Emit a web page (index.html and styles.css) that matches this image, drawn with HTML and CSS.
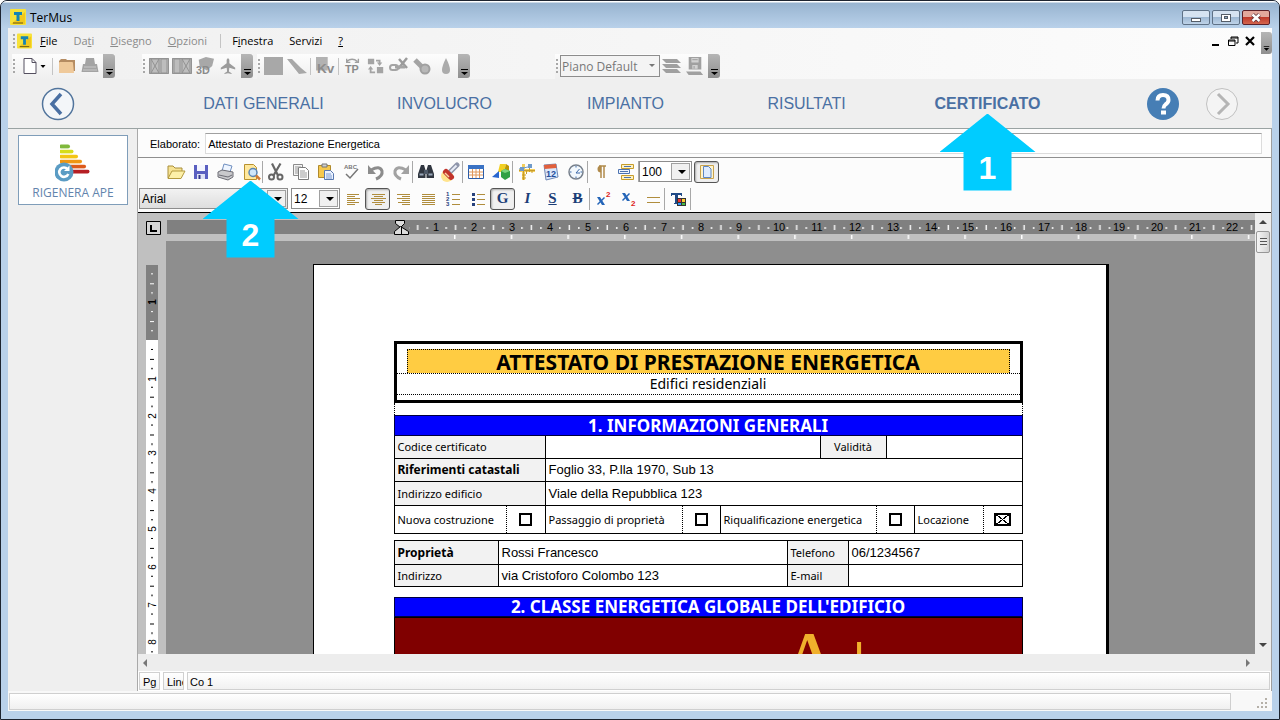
FILE: index.html
```html
<!DOCTYPE html>
<html lang="it">
<head>
    <meta charset="UTF-8">
    <meta name="viewport" content="width=device-width, initial-scale=1.0">
    <title>TerMus</title>
    <link rel="stylesheet" href="styles.css">
</head>
<body>
<div class="window">
    <header class="titlebar">
        <svg class="logo" viewBox="0 0 16 16"><rect width="16" height="16" rx="1" fill="#f7e23a"/><path d="M1 15h14V3z" fill="#f2c81c"/><path d="M4 3h8v3h-2.500v6h-3V6H4z" fill="#1584b5"/><path d="M3 14h10" stroke="#6b5a10"/></svg>
        <span class="app-name">TerMus</span>
        <div class="win-buttons">
            <button class="win-btn" aria-label="Riduci"><svg viewBox="0 0 26 13"><rect x="8.500" y="7.500" width="9" height="3" fill="#fff" stroke="#555d68"/></svg></button>
            <button class="win-btn" aria-label="Ingrandisci"><svg viewBox="0 0 26 13"><rect x="8.500" y="3.500" width="9" height="7" fill="#fff" stroke="#555d68"/><rect x="11.500" y="5.500" width="3" height="2" fill="#8fa9c4" stroke="#555d68"/></svg></button>
            <button class="win-btn close" aria-label="Chiudi"><svg viewBox="0 0 26 13"><path d="M9.500 3.500l7 6.500m0-6.500l-7 6.500" stroke="#61343a" stroke-width="4"/><path d="M9.500 3.500l7 6.500m0-6.500l-7 6.500" stroke="#fff" stroke-width="2.400"/></svg></button>
        </div>
    </header>

    <div class="bars">
        <nav class="menubar">
            <span class="grip"></span>
            <svg class="logo small" viewBox="0 0 16 16"><rect width="16" height="16" rx="1" fill="#f7e23a"/><path d="M1 15h14V3z" fill="#f2c81c"/><path d="M4 3h8v3h-2.500v6h-3V6H4z" fill="#1584b5"/><path d="M3 14h10" stroke="#6b5a10"/></svg>
            <button class="menu"><u>F</u>ile</button>
            <button class="menu" disabled>Da<u>t</u>i</button>
            <button class="menu" disabled><u>D</u>isegno</button>
            <button class="menu" disabled><u>O</u>pzioni</button>
            <span class="menu-sep"></span>
            <button class="menu">F<u>i</u>nestra</button>
            <button class="menu">Servizi</button>
            <button class="menu"><u>?</u></button>
            <div class="mdi">
                <button class="mdi-btn" aria-label="Riduci finestra"><svg viewBox="0 0 12 12"><path d="M2 9h7v2H2z"/></svg></button>
                <button class="mdi-btn" aria-label="Ripristina finestra"><svg viewBox="0 0 12 12"><path d="M4 2h7v6H9M4 2v2M4 3h7M1.500 5h6.500v5.500H1.500zM1 6h7" fill="none" stroke="#000"/></svg></button>
                <button class="mdi-btn" aria-label="Chiudi finestra"><svg viewBox="0 0 12 12"><path d="M2 2l8 8M10 2l-8 8" stroke="#000" stroke-width="2.200"/></svg></button>
                <button class="overflow" aria-label="Altro"><svg viewBox="0 0 12 8"><path d="M3 2h6v1H3zM3 4h6L6 7z"/></svg></button>
            </div>
        </nav>
        <div class="toolbar">
            <div class="tb-group first">
                <span class="grip"></span>
                <button class="tb-btn wide" aria-label="Nuovo"><svg viewBox="0 0 32 18"><path d="M6.500 1.500h8l4 4v11h-12z" fill="#fff" stroke="#555060"/><path d="M14.500 1.500v4h4" fill="none" stroke="#555060"/><path d="M23 8h5l-2.500 3z"/></svg></button>
                <span class="tb-sep"></span>
                <button class="tb-btn" aria-label="Apri"><svg viewBox="0 0 18 18"><path d="M1 4l2-2h5l1 1h8v11H1z" fill="#b58c62"/><path d="M1 16V6q0-1 1-1h12q1 0 1 1l1 10z" fill="#efc99a"/></svg></button>
                <button class="tb-btn" aria-label="Stampa"><svg viewBox="0 0 18 18"><path d="M5 1h8l1 6h2l1.500 8H.5L2 7h2z" fill="#a3a3a3"/><path d="M3 10h12M2 13h14" stroke="#c9c9c9"/></svg></button>
                <button class="overflow" aria-label="Altro"><svg viewBox="0 0 12 8"><path d="M3 1h7v1H3zM3 4h7L6.500 7z" fill="#000"/></svg></button>
            </div>
            <div class="tb-group second">
                <span class="grip"></span>
                <button class="tb-btn" aria-label="Pareti" disabled><svg viewBox="0 0 20 18"><path d="M0 1h20v16H0z" fill="#bdbdbd"/><path d="M.5 1.500h19v15H.5zM2 2h8v14H2zl8 14M10 2L2 16M12 2h6v14h-6z" fill="none" stroke="#939393"/></svg></button>
                <button class="tb-btn" aria-label="Finestre" disabled><svg viewBox="0 0 20 18"><path d="M0 1h20v16H0z" fill="#bdbdbd"/><path d="M.5 1.500h19v15H.5zM10 2h8v14h-8zl8 14M18 2l-8 14M2 2h6v14H2z" fill="none" stroke="#939393"/></svg></button>
                <button class="tb-btn" aria-label="Vista 3D" disabled><svg viewBox="0 0 20 20"><path d="M3 3l8-3 9 2-2 8-6 5-8-5z" fill="#a8a8a8"/><text x="0" y="19" class="g3d">3D</text></svg></button>
                <button class="tb-btn" aria-label="Orientamento" disabled><svg viewBox="0 0 18 20"><path d="M9 1l1.500 2v4L17 12v2l-6.500-2-.5 4 3 2v1l-4-1-4 1v-1l3-2-.5-4L1 14v-2l6.500-5V3z" fill="#9b9b9b"/></svg></button>
                <button class="overflow" aria-label="Altro"><svg viewBox="0 0 12 8"><path d="M3 1h7v1H3zM3 4h7L6.500 7z" fill="#000"/></svg></button>
            </div>
            <div class="tb-group third">
                <span class="grip"></span>
                <button class="tb-btn" aria-label="Superficie" disabled><svg viewBox="0 0 20 18"><path d="M0 0h19v18H0z" fill="#a8a8a8"/></svg></button>
                <button class="tb-btn" aria-label="Ponte" disabled><svg viewBox="0 0 20 18"><path d="M0 2h5l9 9 6 5-8 1z" fill="#a8a8a8"/></svg></button>
                <span class="tb-sep"></span>
                <button class="tb-btn" aria-label="Kv" disabled><svg viewBox="0 0 20 20"><path d="M0 0h13v15H0z" fill="#b2b2b2"/><text x="1" y="18" class="gkv">Kv</text></svg></button>
                <span class="tb-sep"></span>
                <button class="tb-btn" aria-label="TP" disabled><svg viewBox="0 0 20 20"><path d="M3 5q6-5 12 0M3 2v4h4M16 2v4h-4" fill="none" stroke="#a0a0a0" stroke-width="1.500"/><text x="1" y="18" class="g3d">TP</text></svg></button>
                <button class="tb-btn" aria-label="Sostituisci" disabled><svg viewBox="0 0 20 20"><path d="M1 2h7v6H1zM11 11h7v7h-7zM10 3h5v3h2l-3 4-3-4h2V5h-3zM3 18v-4H1l3-4 3 4H5v2h4v2z" fill="#a4a4a4"/></svg></button>
                <button class="tb-btn" aria-label="Scollega" disabled><svg viewBox="0 0 20 18"><path d="M10 2l8 9M18 1l-9 11" stroke="#9b9b9b" stroke-width="2.500"/><rect x="1" y="8" width="8" height="5" rx="2.500" fill="none" stroke="#a4a4a4" stroke-width="2"/><path d="M6 10h10" stroke="#a4a4a4" stroke-width="3"/></svg></button>
                <button class="tb-btn" aria-label="Pennello" disabled><svg viewBox="0 0 20 18"><path d="M3 3l7 7" stroke="#a4a4a4" stroke-width="5"/><circle cx="13" cy="12" r="4.500" fill="#b8b8b8" stroke="#a0a0a0" stroke-width="2"/></svg></button>
                <button class="tb-btn" aria-label="Goccia" disabled><svg viewBox="0 0 20 18"><path d="M11 1q4 8 4 12a4 4 0 0 1-8 0q0-4 4-12z" fill="#ababab"/></svg></button>
                <button class="overflow" aria-label="Altro"><svg viewBox="0 0 12 8"><path d="M3 1h7v1H3zM3 4h7L6.500 7z" fill="#000"/></svg></button>
            </div>
            <div class="tb-group fourth">
                <span class="grip"></span>
                <div class="combo flat"><select aria-label="Piano"><option>Piano Default</option></select></div>
                <button class="tb-btn" aria-label="Piani" disabled><svg viewBox="0 0 20 18"><path d="M0 2h15l4 4H4zM0 7h15l4 4H4zM0 12h15l4 4H4z" fill="#a0a0a0"/></svg></button>
                <button class="tb-btn" aria-label="Salva piano" disabled><svg viewBox="0 0 20 20"><path d="M3 0h14v14H3zM0 16h16l3 4H3z" fill="#a0a0a0"/><path d="M6 1h8v5H6zM7 9h6v4H7z" fill="#d2d2d2"/><path d="M7 3h6M9 10v3" stroke="#999"/></svg></button>
                <button class="overflow" aria-label="Altro"><svg viewBox="0 0 12 8"><path d="M3 1h7v1H3zM3 4h7L6.500 7z" fill="#000"/></svg></button>
            </div>
        </div>
    </div>

    <nav class="steps">
        <div class="steps-side">
            <button class="round" aria-label="Indietro"><svg viewBox="0 0 34 34"><circle cx="17" cy="17" r="15.500" fill="#f3f6f9" stroke="#51749c" stroke-width="1.500"/><path d="M20 7L11 17l9 10" fill="none" stroke="#4a70a3" stroke-width="3.500"/></svg></button>
        </div>
        <div class="tabs">
            <a class="tab" href="#dati">DATI GENERALI</a>
            <a class="tab" href="#involucro">INVOLUCRO</a>
            <a class="tab" href="#impianto">IMPIANTO</a>
            <a class="tab" href="#risultati">RISULTATI</a>
            <div class="anchor">
                <a class="tab active" href="#certificato">CERTIFICATO</a>
                <div class="callout"><span>1</span></div>
            </div>
        </div>
        <div class="steps-side right">
            <button class="round" aria-label="Guida"><svg viewBox="0 0 34 34"><circle cx="17" cy="17" r="16" fill="#467eb5"/><path d="M11.500 13.500q0-5.500 5.500-5.500t5.500 5q0 2.500-3 4.500-2 1.500-2 4" fill="none" stroke="#fff" stroke-width="4"/><path d="M15 23.500h5v4h-5z" fill="#fff"/></svg></button>
            <button class="round" aria-label="Avanti" disabled><svg viewBox="0 0 34 34"><circle cx="17" cy="17" r="15.500" fill="#f4f4f4" stroke="#c0c0c0"/><path d="M13 7l10 10-10 10" fill="none" stroke="#b5b5b5" stroke-width="3"/></svg></button>
        </div>
    </nav>

    <div class="main">
        <aside class="sidebar">
            <button class="card">
                <svg viewBox="0 0 36 40"><path d="M6 4.500h7" stroke="#7fb83b" stroke-width="4" stroke-linecap="round"/><path d="M6 9.500h10.500" stroke="#d6dd1a" stroke-width="4" stroke-linecap="round"/><path d="M6 14.500h15" stroke="#f3c514" stroke-width="4" stroke-linecap="round"/><path d="M6 19.500h19" stroke="#ef9613" stroke-width="4" stroke-linecap="round"/><path d="M6 24.500h23" stroke="#dd5a1b" stroke-width="4" stroke-linecap="round"/><path d="M6 29.500h26.500" stroke="#b61f24" stroke-width="4" stroke-linecap="round"/><path d="M2 0h3v40H2z" fill="#fff"/><path d="M5 6.700h30v.8H5zM5 11.700h30v.8H5zM5 16.700h30v.8H5zM5 21.700h30v.8H5zM5 26.700h30v.8H5z" fill="#fff"/><circle cx="9" cy="30" r="9.500" fill="#5b9cc4"/><path d="M12.500 27a4.700 4.700 0 1 0 .8 5" fill="none" stroke="#fff" stroke-width="2.600"/><path d="M14.500 23.500v5.500H9z" fill="#fff"/></svg>
                RIGENERA APE
            </button>
        </aside>

        <section class="content">
            <div class="field-row">
                <label for="elaborato">Elaborato:</label>
                <input id="elaborato" type="text" value="Attestato di Prestazione Energetica">
            </div>

            <div class="edit-bar top">
                <button class="ic" aria-label="Apri"><svg viewBox="0 0 20 20"><path d="M2 16V4h5l2 2h7v3" fill="#f7e394" stroke="#a98f3a"/><path d="M2 16.500L6 9h13l-4 7.500z" fill="#fdf0a8" stroke="#b49a3e"/></svg></button>
                <button class="ic" aria-label="Salva"><svg viewBox="0 0 20 20"><path d="M3 3h14v14H3z" fill="#5a5fc0"/><path d="M6 3h8v6H6z" fill="#f4f6ff"/><path d="M6 12h8v5H6z" fill="#dfe2f5"/><path d="M7.500 13h2v4h-2z" fill="#34388a"/></svg></button>
                <button class="ic" aria-label="Stampa"><svg viewBox="0 0 20 20"><path d="M6 9l2-7 8 2-2 6z" fill="#eef5ff" stroke="#6f8fc0"/><path d="M2 10l4-2 11 2v5l-5 3-10-3z" fill="#c9c9cc" stroke="#6c6c74"/><path d="M3 13l9 2 4-2" fill="none" stroke="#6c6c74"/></svg></button>
                <div class="anchor">
                    <button class="ic" aria-label="Anteprima di stampa"><svg viewBox="0 0 20 20"><path d="M3.500 2.500h9l3 3v12h-12z" fill="#ffe89c" stroke="#b8912e"/><circle cx="12" cy="10.500" r="4" fill="#cfe6fb" stroke="#5d86b5" stroke-width="1.500"/><path d="M15 13.500l4 4" stroke="#d07a35" stroke-width="2.500"/></svg></button>
                    <div class="callout"><span>2</span></div>
                </div>
                <button class="ic split" aria-label="Taglia"><svg viewBox="0 0 20 20"><path d="M6 1.500l6 12M14.500 1.500l-7 12" stroke="#666" stroke-width="2.200"/><circle cx="5.500" cy="15" r="2.500" fill="none" stroke="#666" stroke-width="2"/><circle cx="14" cy="15" r="2.500" fill="none" stroke="#666" stroke-width="2"/></svg></button>
                <button class="ic" aria-label="Copia"><svg viewBox="0 0 20 20"><path d="M2.500 2.500h9v11h-9z" fill="#f4f4f4" stroke="#8b8b8b"/><path d="M7.500 5.500h7l3 3v9h-10z" fill="#fff" stroke="#7b7b7b"/><path d="M4 5h6M4 7h3M4 9h3M4 11h3M9 9h5M9 11h7M9 13h7M9 15h7" stroke="#999"/></svg></button>
                <button class="ic" aria-label="Incolla"><svg viewBox="0 0 20 20"><path d="M2.500 3.500h12v12h-12z" fill="#f5c84e" stroke="#b08a2c"/><path d="M6 2h5v3H6z" fill="#cfcfcf" stroke="#777"/><path d="M8.500 8.500h6l3 3v6h-9z" fill="#eaf2ff" stroke="#5878b0"/><path d="M10 12h5M10 14h6M10 16h6" stroke="#7c9bd0"/></svg></button>
                <button class="ic" aria-label="Ortografia"><svg viewBox="0 0 20 20"><text x="3" y="7" class="abc">ABC</text><path d="M5 12l4 4 8-9" fill="none" stroke="#777" stroke-width="1.500"/></svg></button>
                <button class="ic" aria-label="Annulla"><svg viewBox="0 0 20 20"><path d="M5 8q9-5 11 1 1 5-6 8" fill="none" stroke="#8c8c8c" stroke-width="3"/><path d="M2 3v9h8z" fill="#8c8c8c"/></svg></button>
                <button class="ic" aria-label="Ripeti"><svg viewBox="0 0 20 20"><path d="M15 8Q6 3 4 9q-1 5 6 8" fill="none" stroke="#a2a2a2" stroke-width="3"/><path d="M18 3v9h-8z" fill="#a2a2a2"/></svg></button>
                <button class="ic split" aria-label="Trova"><svg viewBox="0 0 20 20"><path d="M5 3h3l1.500 5v8H2v-4zM12 3h3l3 9v4h-7.500V8z" fill="#303640"/><path d="M8 8h4v4H8z" fill="#4e5968"/><path d="M3.500 12.500h4M12.500 12.500h4" stroke="#98a6b8" stroke-width="2"/></svg></button>
                <button class="ic" aria-label="Evidenzia"><svg viewBox="0 0 20 20"><circle cx="6" cy="14" r="6" fill="#ffe48e"/><path d="M9 10l7-7" stroke="#8f96ab" stroke-width="5" stroke-linecap="round"/><path d="M9.500 9.500l6-6" stroke="#e9edf7" stroke-width="2"/><path d="M5 10l5 5" stroke="#c2342b" stroke-width="6" stroke-linecap="round"/><path d="M4 11l4 4" stroke="#f8d6a5" stroke-width="1.500"/></svg></button>
                <button class="ic split" aria-label="Tabella"><svg viewBox="0 0 20 20"><path d="M2.500 3.500h15v13h-15z" fill="#fff" stroke="#2b5ca8"/><path d="M2 3h16v4H2z" fill="#3a72c4"/><path d="M3 10h14M3 13h14M6.500 7v9M10 7v9M13.500 7v9" stroke="#e0985c"/></svg></button>
                <button class="ic" aria-label="Forme"><svg viewBox="0 0 20 20"><path d="M9 2h6l-2 8H7z" fill="#f2d021"/><path d="M15 2l3 2v6h-5z" fill="#bd9600"/><path d="M1 15l7-6v7z" fill="#2866cf"/><path d="M10 9l4-2 5 2v6l-5 3-4-3z" fill="#2fa043"/><path d="M10 9l4 2 5-2-5-2z" fill="#7bd47e"/></svg></button>
                <button class="ic split" aria-label="Griglia"><svg viewBox="0 0 20 20"><path d="M3 7h16v3H3zM6 2h3v16H6z" fill="#f4cf5c"/><path d="M3 8.500h16M7.500 5v13M13.500 5v5M10.500 8v4M16 8v3M6 13h4M6 16h4" stroke="#c79c2a"/><path d="M4 5h4v4H4zM12 2h4v4h-4z" fill="#6f9ac9"/><path d="M3 7l13-3" stroke="#6f9ac9"/></svg></button>
                <button class="ic" aria-label="Data"><svg viewBox="0 0 20 20"><path d="M3 3l12-1 2 13-12 3z" fill="#dce8fa" stroke="#7087b5"/><path d="M3 3l12-1 .5 4L3.500 7z" fill="#e2603c"/><text x="5" y="15" class="cal">12</text></svg></button>
                <button class="ic" aria-label="Ora"><svg viewBox="0 0 20 20"><circle cx="10" cy="10" r="7" fill="#f2f8fd" stroke="#77808c" stroke-width="1.500"/><path d="M10 11l3.500-4M10 11h4M10 4v1.500M10 14.500V16M4 10h1.500M14.500 10H16" stroke="#3d69a8"/></svg></button>
                <button class="ic split" aria-label="Paragrafo"><svg viewBox="0 0 20 20"><path d="M8 4h7M10 4v12M13 4v12" stroke="#b08a4a" stroke-width="1.500"/><path d="M10 3.500a3.500 3.500 0 0 0 0 7z" fill="#b08a4a"/></svg></button>
                <button class="ic" aria-label="Campi"><svg viewBox="0 0 20 20"><path d="M5.500 2.500h12v4h-12zM5.500 13.500h12v4h-12z" fill="#fff2c0" stroke="#c79c2a"/><path d="M2.500 7.500h11v4h-11z" fill="#eef4ff" stroke="#4d73b0"/><path d="M8 4.500h7M4 9.500h8M8 15.500h7" stroke="#4d73b0"/></svg></button>
                <div class="combo zoom split"><select aria-label="Zoom"><option>100</option></select></div>
                <button class="ic pressed split" aria-label="Layout pagina"><svg viewBox="0 0 20 20"><path d="M3.500 3.500h13v13h-13z" fill="#fff4cd" stroke="#c9a34c"/><path d="M6.500 4.500h5l2.500 2.500v8.500H6.500z" fill="#dfecff" stroke="#5d86c4"/></svg></button>
            </div>

            <div class="edit-bar">
                <div class="combo font"><select aria-label="Carattere"><option>Arial</option></select></div>
                <div class="combo size"><select aria-label="Dimensione"><option>12</option></select></div>
                <button class="ic" aria-label="Sinistra"><svg viewBox="0 0 20 20"><path d="M4 5.500h12M4 7.500h8M4 9.500h13M4 11.500h8M4 13.500h12M4 15.500h8" stroke="#b08d3d"/></svg></button>
                <button class="ic pressed" aria-label="Centro"><svg viewBox="0 0 20 20"><path d="M4 5.500h13M6 7.500h9M3 9.500h15M6 11.500h9M4 13.500h13M7 15.500h7" stroke="#b08d3d"/></svg></button>
                <button class="ic" aria-label="Destra"><svg viewBox="0 0 20 20"><path d="M4 5.500h13M9 7.500h8M4 9.500h13M9 11.500h8M5 13.500h12M9 15.500h8" stroke="#b08d3d"/></svg></button>
                <button class="ic" aria-label="Giustifica"><svg viewBox="0 0 20 20"><path d="M4 5.500h13M4 7.500h13M4 9.500h13M4 11.500h13M4 13.500h13M4 15.500h13" stroke="#b08d3d"/></svg></button>
                <button class="ic" aria-label="Elenco numerato"><svg viewBox="0 0 20 20"><path d="M9 5.500h8M9 10.500h8M9 15.500h8" stroke="#b08d3d"/><text class="num"><tspan x="3" y="7">1</tspan><tspan x="3" y="12">2</tspan><tspan x="3" y="17">3</tspan></text></svg></button>
                <button class="ic" aria-label="Elenco puntato"><svg viewBox="0 0 20 20"><path d="M9 5.500h8M9 10.500h8M9 15.500h8" stroke="#b08d3d"/><path d="M4 4h3v3H4zM4 9h3v3H4zM4 14h3v3H4z" fill="#27417c"/></svg></button>
                <button class="ic pressed split letter" aria-label="Grassetto"><b>G</b></button>
                <button class="ic letter" aria-label="Corsivo"><i>I</i></button>
                <button class="ic letter" aria-label="Sottolineato"><u>S</u></button>
                <button class="ic letter" aria-label="Barrato"><s>B</s></button>
                <button class="ic split" aria-label="Apice"><svg viewBox="0 0 20 20"><path d="M4 8h3l5 8h-3z" fill="#2465b8"/><path d="M11.500 8.500l-7 7" stroke="#2465b8" stroke-width="1.500"/><text x="13" y="8" class="red">2</text></svg></button>
                <button class="ic" aria-label="Pedice"><svg viewBox="0 0 20 20"><path d="M4 4h3l5 8h-3z" fill="#2465b8"/><path d="M11.500 4.500l-7 7" stroke="#2465b8" stroke-width="1.500"/><text x="13" y="17" class="red">2</text></svg></button>
                <button class="ic" aria-label="Interlinea"><svg viewBox="0 0 20 20"><path d="M4 8.500h13M4 13.500h13" stroke="#b08d3d"/></svg></button>
                <button class="ic split" aria-label="Colore testo"><svg viewBox="0 0 20 20"><path d="M3 4h11v3h-1V6h-3v8h2v1H6v-1h1V6H4v1H3z" fill="#204a87"/><path d="M9 9h9v8H9z" fill="#333"/><path d="M10 10h3v3h-3z" fill="#e33"/><path d="M14 10h3v3h-3z" fill="#fc3"/><path d="M10 14h3v2h-3z" fill="#39f"/><path d="M14 14h3v2h-3z" fill="#4b4"/></svg></button>
                <span class="bar-end"></span>
            </div>

            <div class="editor">
                <div class="corner"><svg viewBox="0 0 15 14"><path d="M.5.500h14v13H.5z" fill="#d6d6d6" stroke="#000"/><path d="M5 4v6h6" fill="none" stroke="#000" stroke-width="2"/></svg></div>
                <div class="ruler-h">
                    <svg>
                        <defs>
                            <pattern id="cm" x="232.500" y="0" width="37.900" height="28" patternUnits="userSpaceOnUse"><path d="M9 14h1.500v2H9zM18.500 12H20v5h-1.500zM28 14h1.500v2H28z" fill="#f4f4f4"/></pattern>
                            <pattern id="tab" x="288" y="0" width="56.700" height="28" patternUnits="userSpaceOnUse"><path d="M0 22h1.500v4H0z" fill="#fff"/></pattern>
                        </defs>
                        <rect x="1" y="7" width="100%" height="14" fill="#808080"/>
                        <rect x="243" y="0" width="100%" height="28" fill="url(#cm)"/>
                        <rect x="288" y="0" width="100%" height="28" fill="url(#tab)"/>
                        <g class="nums">
                            <text x="270" y="18">1</text><text x="308" y="18">2</text><text x="346" y="18">3</text><text x="384" y="18">4</text><text x="422" y="18">5</text><text x="460" y="18">6</text><text x="498" y="18">7</text><text x="535" y="18">8</text><text x="573" y="18">9</text><text x="613" y="18">10</text><text x="651" y="18">11</text><text x="689" y="18">12</text><text x="727" y="18">13</text><text x="765" y="18">14</text><text x="802" y="18">15</text><text x="840" y="18">16</text><text x="878" y="18">17</text><text x="915" y="18">18</text><text x="953" y="18">19</text><text x="991" y="18">20</text><text x="1029" y="18">21</text><text x="1066" y="18">22</text>
                        </g>
                        <path d="M229.500 7.500h9v3l-4 4-5-4z" fill="#ddd" stroke="#000"/><path d="M228.500 21.500v-3l6-5 8 5v3z" fill="#ddd" stroke="#000"/><path d="M235.500 14v7" stroke="#000"/>
                    </svg>
                </div>
                <div class="ruler-v">
                    <svg>
                        <defs>
                            <pattern id="cmv" x="0" y="99" width="28" height="37.800" patternUnits="userSpaceOnUse"><path d="M13 9h2v1h-2zM12 19h4v1h-4zM13 28h2v1h-2z" fill="#000"/></pattern>
                            <pattern id="cmw" x="0" y="99" width="28" height="37.800" patternUnits="userSpaceOnUse"><path d="M13 9h2v1h-2zM12 19h4v1h-4zM13 28h2v1h-2z" fill="#fff"/></pattern>
                        </defs>
                        <rect x="8" y="24" width="12" height="75" fill="#808080"/>
                        <rect x="8" y="99" width="12" height="2000" fill="#fff"/>
                        <rect x="8" y="24" width="12" height="75" fill="url(#cmw)"/>
                        <rect x="8" y="99" width="12" height="2000" fill="url(#cmv)"/>
                        <g class="nums vert">
                            <text transform="translate(18 61) rotate(-90)" font-weight="bold">1</text><text transform="translate(18 138) rotate(-90)">1</text><text transform="translate(18 175) rotate(-90)">2</text><text transform="translate(18 212) rotate(-90)">3</text><text transform="translate(18 250) rotate(-90)">4</text><text transform="translate(18 288) rotate(-90)">5</text><text transform="translate(18 326) rotate(-90)">6</text><text transform="translate(18 364) rotate(-90)">7</text><text transform="translate(18 401) rotate(-90)">8</text>
                        </g>
                    </svg>
                </div>
                <div class="workspace">
                    <article class="page">
                        <div class="doc-title">
                            <h1>ATTESTATO DI PRESTAZIONE ENERGETICA</h1>
                            <p>Edifici residenziali</p>
                        </div>
                        <div class="spacer"></div>
                        <table class="grid info">
                            <colgroup><col class="c112"><col class="c39"><col class="c137"><col class="c38"><col class="c100"><col class="c56"><col class="c10"><col class="c28"><col class="c69"><col class="c39"></colgroup>
                            <tr class="head"><th colspan="10">1. INFORMAZIONI GENERALI</th></tr>
                            <tr class="r23"><td class="lab" colspan="2">Codice certificato</td><td colspan="3"></td><td class="lab mid" colspan="2">Validità</td><td colspan="3"></td></tr>
                            <tr class="r23"><td class="lab bold" colspan="2">Riferimenti catastali</td><td class="val" colspan="8">Foglio 33, P.lla 1970, Sub 13</td></tr>
                            <tr class="r24"><td class="lab" colspan="2">Indirizzo edificio</td><td class="val" colspan="8">Viale della Repubblica 123</td></tr>
                            <tr class="r28">
                                <td class="opt"><label for="nuova">Nuova costruzione</label></td><td class="chk"><input type="checkbox" id="nuova"></td>
                                <td class="opt"><label for="passaggio">Passaggio di proprietà</label></td><td class="chk"><input type="checkbox" id="passaggio"></td>
                                <td class="opt" colspan="2"><label for="riqual">Riqualificazione energetica</label></td><td class="chk" colspan="2"><input type="checkbox" id="riqual"></td>
                                <td class="opt"><label for="locazione">Locazione</label></td><td class="chk"><input type="checkbox" id="locazione" checked></td>
                            </tr>
                        </table>
                        <table class="grid owner">
                            <colgroup><col class="c104"><col class="c289"><col class="c61"><col class="c174"></colgroup>
                            <tr class="r24"><td class="lab bold">Proprietà</td><td class="val">Rossi Francesco</td><td class="lab">Telefono</td><td class="val">06/1234567</td></tr>
                            <tr class="r22"><td class="lab">Indirizzo</td><td class="val">via Cristoforo Colombo 123</td><td class="lab">E-mail</td><td></td></tr>
                        </table>
                        <h2 class="blue">2. CLASSE ENERGETICA GLOBALE DELL'EDIFICIO</h2>
                        <div class="class-box">A<span>+</span></div>
                    </article>
                </div>
                <div class="scroll-v"><i class="up"></i><div class="thumb"></div><i class="down"></i></div>
            </div>
            <div class="scroll-h"><i class="left"></i><i class="rightward"></i></div>
            <div class="doc-status"><span class="cell">Pg</span><span class="cell">Line</span><span class="cell fill">Co 1</span></div>
        </section>
    </div>

    <footer class="statusbar">
        <div class="status-cell"></div>
        <svg class="resize" viewBox="0 0 12 12"><path d="M8 0h2v2H8zM8 4h2v2H8zM8 8h2v2H8zM4 4h2v2H4zM4 8h2v2H4zM0 8h2v2H0z" fill="#b5b0a8"/></svg>
    </footer>
</div>
</body>
</html>
```
FILE: styles.css
```css
* {
    box-sizing: border-box;
}

body {
    margin: 0;
    font-family: "Open Sans", "Noto Sans", sans-serif;
    font-size: 11px;
    color: #000;
}

button {
    margin: 0;
    padding: 0;
    border: none;
    background: none;
    font: inherit;
    color: inherit;
}

svg {
    display: block;
}

/* Finestra */
.window {
    display: flex;
    flex-direction: column;
    height: 100vh;
    padding: 0 7px 8px;
    border: 1px solid #1d2430;
    border-radius: 7px 7px 0 0;
    background: #b9d1ea;
    overflow: hidden;
}

.titlebar {
    display: flex;
    align-items: center;
    height: 27px;
    margin: 0 -7px;
    padding: 5px 2px 0 9px;
    background: linear-gradient(#fff 1px, #98b4d0 2px, #b9d1ea);
}

.logo {
    width: 16px;
    height: 16px;
}

.app-name {
    flex: 1;
    margin-left: 4px;
    font-size: 12px;
}

.win-buttons {
    display: flex;
    gap: 2px;
    margin-right: 7px;
}

.win-btn {
    width: 28px;
    height: 15px;
    border: 1px solid #5f7186;
    border-radius: 2px;
    background: linear-gradient(#d6e3f1 45%, #9fb9d4 50%, #bfd3e8);
}

.win-btn.close {
    border-color: #5b2029;
    background: linear-gradient(#e2a79c 45%, #bf3a2c 50%, #d4664e);
}

/* Menu */
.bars {
    background: linear-gradient(90deg, #f0f0f0, #fcfcfc);
}

.menubar {
    display: flex;
    align-items: center;
    height: 26px;
    padding-left: 4px;
}

.grip {
    width: 5px;
    height: 16px;
    background: radial-gradient(circle at 2px 2px, #a8a8a8 1px, transparent 1px) 0 0 / 5px 4px;
}

.menu {
    padding: 0 8px;
    line-height: 20px;
}

.menu:disabled {
    color: #8a8a8a;
}

.logo.small {
    width: 15px;
}

.menu-sep {
    width: 1px;
    height: 14px;
    margin: 0 3px 0 5px;
    background: #c4c4c4;
}

.mdi {
    display: flex;
    align-items: center;
    gap: 5px;
    margin-left: auto;
    height: 26px;
}

.mdi-btn {
    width: 12px;
    height: 12px;
}

.mdi .overflow {
    align-self: flex-end;
    width: 11px;
    height: 22px;
    margin-left: 0;
}

.toolbar {
    display: flex;
    align-items: center;
    height: 25px;
}

.tb-group {
    display: flex;
    align-items: center;
    height: 25px;
    padding-bottom: 1px;
    background: linear-gradient(#fdfdfd, #efefef);
}

.first {
    margin-left: 4px;
}

.second {
    margin-left: 27px;
}

.third {
    margin-left: 4px;
}

.fourth {
    margin-left: 85px;
}

.tb-btn {
    display: flex;
    justify-content: center;
    width: 23px;
}

.tb-btn svg {
    width: 20px;
    height: 18px;
}

.tb-btn.wide,
.tb-btn.wide svg {
    width: 33px;
}

.tb-sep {
    width: 1px;
    height: 17px;
    margin: 0 2px;
    background: #c4c4c4;
}

.overflow {
    display: flex;
    align-items: flex-end;
    width: 12px;
    height: 24px;
    margin-left: 2px;
    padding-bottom: 2px;
    border-radius: 0 3px 3px 0;
    background: linear-gradient(#b5b5b5, #8f8f8f);
}

.overflow svg {
    width: 12px;
    height: 8px;
}

.g3d {
    font: bold 12px "Liberation Sans", sans-serif;
    fill: #8a8a8a;
}

.gkv {
    font: bold 15px "Liberation Sans", sans-serif;
    fill: #8c8c8c;
}

/* Caselle a discesa */
.combo {
    position: relative;
    border: 1px solid #8d8d8d;
    background: #fff;
}

.combo select {
    width: 100%;
    height: 100%;
    padding: 0 2px;
    border: none;
    background: transparent;
    appearance: none;
    font: 12px "Liberation Sans", Arial, sans-serif;
    color: #000;
}

.combo::before {
    content: "";
    position: absolute;
    top: 1px;
    right: 1px;
    bottom: 1px;
    width: 17px;
    border: 1px solid #a0a0a0;
    background: #f0f0f0;
    pointer-events: none;
}

.combo::after {
    content: "";
    position: absolute;
    top: 50%;
    right: 5px;
    margin-top: -2px;
    border: 4px solid transparent;
    border-top-color: #000;
    border-bottom: none;
    pointer-events: none;
}

.combo.flat {
    width: 100px;
    height: 22px;
    background: #f4f4f4;
}

.combo.flat select {
    padding: 0 1px;
    font-family: "Open Sans", "Noto Sans", sans-serif;
    color: #777;
}

.combo.flat::before {
    display: none;
}

.combo.flat::after {
    right: 4px;
    border-width: 3px;
    border-bottom: none;
    border-top-color: #777;
}

.combo.font {
    width: 149px;
    height: 21px;
    margin-right: 3px;
}

.combo.font select {
    background: linear-gradient(#f2f2f2, #dedede);
}

.combo.size {
    width: 49px;
    height: 21px;
}

.combo.zoom {
    width: 53px;
    height: 21px;
    margin: 0 2px 0 1px;
}

/* Passi */
.steps {
    display: grid;
    grid-template-columns: 165px 1fr 194px;
    align-items: center;
    height: 50px;
    border-bottom: 1px solid #9aa3a3;
    background: #efefef;
}

.steps-side {
    display: flex;
    gap: 25px;
    padding-left: 33px;
}

.steps-side.right {
    padding-left: 68px;
}

.round svg {
    width: 34px;
    height: 34px;
}

.tabs {
    display: grid;
    grid-template-columns: repeat(5, 1fr);
    text-align: center;
}

.tab {
    font: 16px/20px "Liberation Sans", Arial, sans-serif;
    color: #4a70a3;
    text-decoration: none;
}

.tab.active {
    font-weight: bold;
}

.anchor {
    position: relative;
}

/* Frecce numerate */
.callout {
    position: absolute;
    z-index: 5;
    top: 20px;
    left: 50%;
    width: 96px;
    height: 77px;
    margin-left: -48px;
    padding-top: 36px;
    background: #00ccff;
    clip-path: polygon(50% 0, 100% 50%, 75% 50%, 75% 100%, 25% 100%, 25% 50%, 0 50%);
    font: bold 32px/36px "Liberation Sans", Arial, sans-serif;
    color: #fff;
    text-align: center;
}

/* Corpo */
.main {
    display: flex;
    flex: 1;
    min-height: 0;
}

.sidebar {
    width: 130px;
    padding: 6px 10px;
    border-right: 1px solid #a9a9a9;
    background: #efefef;
}

.card {
    display: flex;
    flex-direction: column;
    align-items: center;
    width: 110px;
    height: 70px;
    padding-top: 5px;
    border: 1px solid #7f9db9;
    background: #fff;
    font-size: 12px;
    line-height: 20px;
    color: #6384ad;
}

.card svg {
    width: 36px;
    height: 42px;
}

.content {
    display: flex;
    flex: 1;
    flex-direction: column;
    min-width: 0;
    border-right: 1px solid #9f9f9f;
    background: #fcfcfc;
    font-family: "Liberation Sans", Arial, sans-serif;
}

.field-row {
    display: flex;
    align-items: center;
    height: 29px;
    padding: 1px 9px 0 12px;
    border-bottom: 1px solid #8f8f8f;
}

.field-row input {
    flex: 1;
    height: 21px;
    margin-left: 5px;
    padding: 0 2px;
    border: 1px solid #dcdcdc;
    border-top-color: #a0a0a0;
    font: 11px "Liberation Sans", Arial, sans-serif;
}

.edit-bar {
    display: flex;
    align-items: center;
    height: 27px;
    padding-left: 1px;
}

.edit-bar.top {
    padding-left: 25px;
}

.ic {
    display: flex;
    align-items: center;
    justify-content: center;
    width: 25px;
    height: 22px;
}

.ic svg {
    width: 20px;
    height: 20px;
}

.split {
    box-shadow: -1px 0 #a8a8a8;
}

.pressed {
    border: 1px solid #555;
    border-radius: 3px;
    background: #f0f0f0;
    box-shadow: inset 1px 1px 2px #aaa;
}

.pressed svg {
    margin: 0 -1px;
}

.letter {
    font: bold 15px "Liberation Serif", serif;
    color: #1c3f78;
}

.bar-end {
    width: 1px;
    height: 22px;
    background: #a8a8a8;
}

.abc {
    font: bold 6px "Liberation Sans", sans-serif;
    fill: #777;
}

.cal {
    font: bold 9px "Liberation Sans", sans-serif;
    fill: #274f9c;
}

.num {
    font: bold 6px "Liberation Sans", sans-serif;
    fill: #27417c;
}

.red {
    font: bold 8px "Liberation Sans", sans-serif;
    fill: #d22;
}

/* Editor */
.editor {
    display: grid;
    grid-template-columns: 28px 1fr 16px;
    grid-template-rows: 28px 1fr;
    flex: 1;
    min-height: 0;
    border-top: 1px solid #000;
    background: #c0c0c0;
}

.corner {
    padding: 8px 0 0 8px;
}

.corner svg {
    width: 15px;
    height: 14px;
}

.ruler-h,
.ruler-v {
    min-width: 0;
    min-height: 0;
    overflow: hidden;
}

.ruler-h svg,
.ruler-v svg {
    width: 100%;
    height: 100%;
}

.nums {
    font: 11px "Liberation Sans", Arial, sans-serif;
    text-anchor: middle;
}

.vert {
    font-size: 10px;
}

.workspace {
    min-width: 0;
    min-height: 0;
    padding-top: 23px;
    background: #8e8e8e;
    overflow: hidden;
}

.scroll-v {
    grid-column: 3;
    grid-row: 1 / 3;
    display: flex;
    flex-direction: column;
    align-items: center;
    padding: 7px 0;
    background: #ededed;
}

.thumb {
    width: 14px;
    height: 22px;
    margin: 7px 0 auto;
    border: 1px solid #979797;
    border-radius: 2px;
    background: repeating-linear-gradient(#555 0 1px, #e8e8e8 1px 3px) center / 7px 9px no-repeat, linear-gradient(90deg, #f5f5f5, #d2d2d2);
}

.up,
.down {
    border: 4px solid transparent;
}

.up {
    border-top: none;
    border-bottom-color: #444;
}

.down {
    border-bottom: none;
    border-top-color: #444;
}

.scroll-h {
    display: flex;
    align-items: center;
    justify-content: space-between;
    height: 17px;
    padding: 0 21px 0 5px;
    background: #ededed;
}

.left,
.rightward {
    border: 4px solid transparent;
}

.left {
    border-left: none;
    border-right-color: #777;
}

.rightward {
    border-right: none;
    border-left-color: #777;
}

/* Pagina del documento */
.page {
    width: 796px;
    height: 1122px;
    margin: 0 auto;
    padding: 76px 83px 0 80px;
    border: 1px solid #000;
    border-right-width: 3px;
    background: #fff;
    font-family: "Noto Sans", sans-serif;
}

.doc-title {
    height: 62px;
    padding-top: 5px;
    border: 3px solid #000;
    text-align: center;
}

.doc-title h1 {
    height: 24px;
    margin: 0 10px;
    border: 1px dotted #000;
    border-bottom: none;
    background: #ffcc42;
    font-size: 21px;
    line-height: 25px;
}

.doc-title p {
    height: 22px;
    margin: 0;
    border: dotted #000;
    border-width: 1px 0;
    font-size: 14px;
    line-height: 19px;
}

.spacer {
    height: 12px;
    border: dotted #000;
    border-width: 0 1px;
}

.grid {
    width: 100%;
    table-layout: fixed;
    border-collapse: collapse;
    font-size: 11px;
}

.grid td {
    padding: 0 3px;
    border: 1px solid #000;
    line-height: 16px;
}

.grid .head th,
.blue {
    height: 20px;
    margin: 0;
    padding: 0;
    border: 1px solid #000040;
    background: #00f;
    font-size: 17px;
    line-height: 18px;
    color: #fff;
    text-align: center;
}

.grid .lab {
    background: #f2f2f2;
}

.grid .mid {
    text-align: center;
}

.grid .bold {
    font-size: 12px;
    font-weight: bold;
}

.grid .val {
    font: 13px/16px "Liberation Sans", Arial, sans-serif;
}

.grid .opt {
    border-right: 1px dotted #000;
    white-space: nowrap;
}

.grid .chk {
    border-left: 1px dotted #000;
    text-align: center;
}

.chk input {
    display: block;
    width: 13px;
    height: 13px;
    margin: 0 auto;
    border: 2px solid #000;
    appearance: none;
}

.chk input:checked {
    width: 17px;
    background: linear-gradient(38deg, transparent 46%, #000 46% 54%, transparent 54%), linear-gradient(-38deg, transparent 46%, #000 46% 54%, transparent 54%);
}

.r22 { height: 22px; }
.r23 { height: 23px; }
.r24 { height: 24px; }
.r28 { height: 28px; }

.c10 { width: 10px; }
.c28 { width: 28px; }
.c38 { width: 38px; }
.c39 { width: 39px; }
.c56 { width: 56px; }
.c61 { width: 61px; }
.c69 { width: 69px; }
.c100 { width: 100px; }
.c104 { width: 104px; }
.c112 { width: 112px; }
.c137 { width: 137px; }
.c174 { width: 174px; }
.c289 { width: 289px; }

.owner {
    margin: 6px 0 10px;
}

.class-box {
    height: 120px;
    padding: 0 140px;
    border: 1px solid #000;
    background: #800000;
    font: 90px/92px "Liberation Serif", serif;
    color: #f0b02c;
    text-align: right;
}

.class-box span {
    margin-left: -6px;
    font-size: 80px;
    line-height: 72px;
    vertical-align: 6px;
}

/* Barre di stato */
.doc-status {
    display: flex;
    gap: 3px;
    height: 20px;
    padding: 1px;
    background: #fff;
    line-height: 18px;
}

.cell {
    width: 21px;
    padding-left: 3px;
    border: 1px solid #d0d0d0;
    background: linear-gradient(#fff, #f1f1f1);
    overflow: hidden;
}

.cell.fill {
    flex: 1;
    padding-left: 2px;
}

.statusbar {
    display: flex;
    align-items: flex-end;
    justify-content: space-between;
    height: 20px;
    padding: 2px 3px 1px 1px;
    background: #f8f8f8;
}

.status-cell {
    width: calc(100% - 38px);
    height: 17px;
    border: 1px solid #cfcfcf;
    background: linear-gradient(#fff, #f0f0f0);
}

.resize {
    width: 12px;
    height: 12px;
}
```
